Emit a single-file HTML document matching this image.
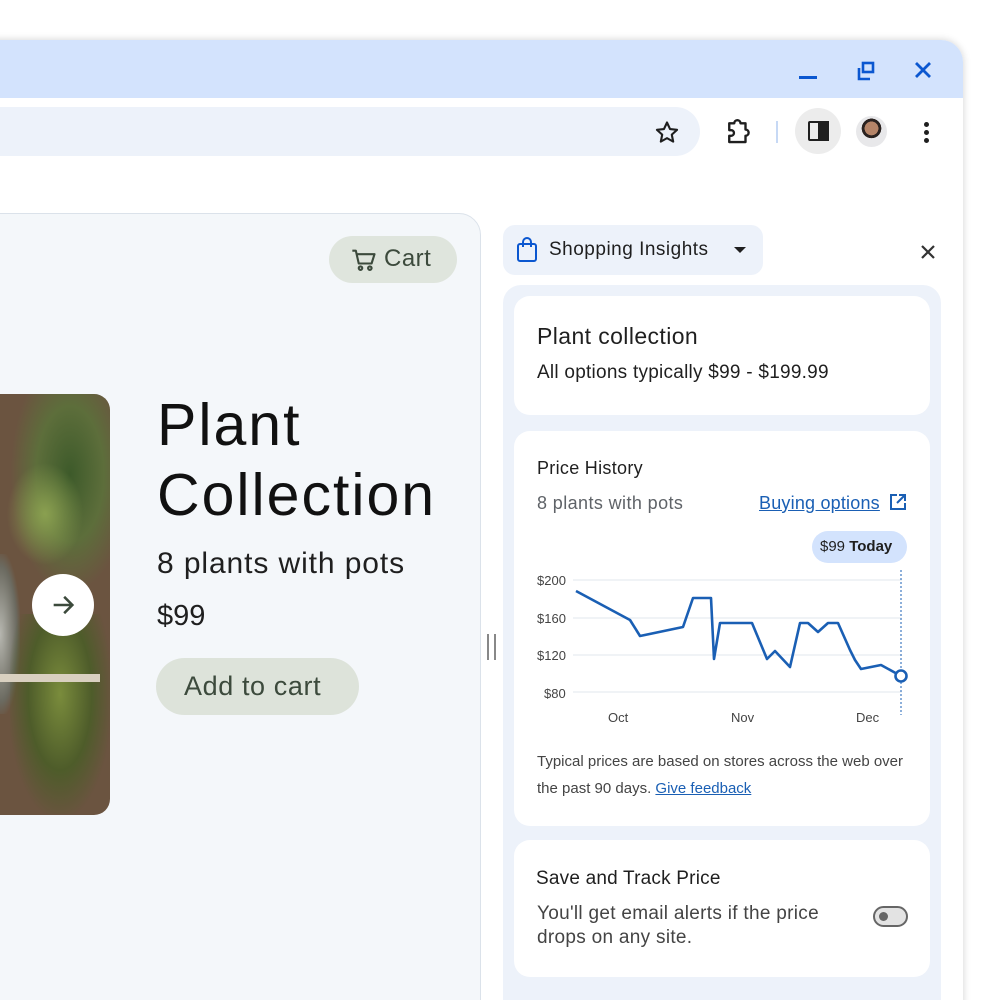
<!DOCTYPE html>
<html style="width:1000px;height:1000px;overflow:hidden"><head><style>
*{margin:0;padding:0;box-sizing:border-box}
body{width:1000px;height:1000px;background:#fff;position:relative;overflow:hidden;font-family:"Liberation Sans",sans-serif;color:#1f1f1f}
.abs{position:absolute}
</style></head><body>
<div class="abs" style="left:-20px;top:40px;width:983px;height:990px;background:#fff;border-radius:0 22px 0 0;box-shadow:0 0 8px rgba(0,0,0,.18)"></div>
<div class="abs" style="left:0;top:40px;width:963px;height:58px;background:#d3e3fd;border-radius:0 22px 0 0"></div>
<div class="abs" style="left:799px;top:76px;width:18px;height:3px;background:#0b57d0"></div>
<svg class="abs" style="left:855px;top:60px" width="22" height="22" viewBox="0 0 22 22" fill="none" stroke="#0b57d0" stroke-width="2.6"><rect x="8" y="3" width="10" height="9"/><path d="M4 8v11h11"/></svg>
<svg class="abs" style="left:913px;top:60px" width="20" height="20" viewBox="0 0 20 20" stroke="#0b57d0" stroke-width="2.8"><path d="M3 3L17 17M17 3L3 17"/></svg>
<div class="abs" style="left:-30px;top:107px;width:730px;height:49px;background:#edf2fa;border-radius:25px"></div>
<svg class="abs" style="left:653px;top:119px" width="28" height="28" viewBox="0 0 24 24" fill="none" stroke="#1f1f1f" stroke-width="1.8" stroke-linejoin="round"><path d="M12 3l2.6 5.6 6 .7-4.5 4.1 1.2 6L12 16.4 6.7 19.4l1.2-6L3.4 9.3l6-.7z"/></svg>
<svg class="abs" style="left:723px;top:117px" width="30" height="30" viewBox="0 0 24 24" fill="none" stroke="#1f1f1f" stroke-width="1.9" stroke-linejoin="round"><path d="M5 5h4a2.5 2.5 0 0 1 5 0h4v5a2.5 2.5 0 0 1 0 5v5H5v-5h1.5a2 2 0 0 0 0-4.5H5z"/></svg>
<div class="abs" style="left:776px;top:121px;width:2px;height:22px;background:#c7d9f5"></div>
<div class="abs" style="left:795px;top:108px;width:46px;height:46px;border-radius:50%;background:#ececec"></div>
<div class="abs" style="left:808px;top:121px;width:21px;height:20px;border:2.5px solid #1f1f1f;border-radius:2px"></div>
<div class="abs" style="left:818px;top:121px;width:11px;height:20px;background:#1f1f1f"></div>
<div class="abs" style="left:856px;top:116px;width:31px;height:31px;border-radius:50%;background:radial-gradient(circle at 50% 40%,#b58468 0 28%,#2a2220 29% 40%,#e8e8ea 41%)"></div>
<div class="abs" style="left:924px;top:122px;width:5px;height:5px;border-radius:50%;background:#1f1f1f;box-shadow:0 8px 0 #1f1f1f,0 16px 0 #1f1f1f"></div>
<div class="abs" style="left:-30px;top:213px;width:511px;height:820px;background:#f4f7fa;border:1px solid #dbe2ea;border-radius:0 22px 0 0"></div>
<div class="abs" style="left:329px;top:236px;width:128px;height:47px;border-radius:24px;background:#dfe5dd"></div>
<svg class="abs" style="left:350px;top:246px" width="28" height="28" viewBox="0 0 24 24" fill="none" stroke="#3c4a3c" stroke-width="1.8" stroke-linejoin="round"><path d="M2 4h3l2.5 11h11L21 7H6.5"/><circle cx="9" cy="19" r="1.5"/><circle cx="17" cy="19" r="1.5"/></svg>
<div class="abs" style="left:384px;top:245px;font-size:24px;color:#3c4a3c;letter-spacing:0.5px">Cart</div>
<div class="abs" style="left:-20px;top:394px;width:130px;height:421px;border-radius:0 16px 16px 0;overflow:hidden;background:#6b5440">
<div class="abs" style="left:30px;top:0;width:100px;height:200px;background:radial-gradient(ellipse at 60% 40%,#3d5a2a,#5d6e3b 40%,transparent 70%)"></div>
<div class="abs" style="left:0;top:160px;width:40px;height:160px;background:radial-gradient(ellipse,#b7b7b0,#6b6a60 60%,transparent 75%)"></div>
<div class="abs" style="left:30px;top:220px;width:100px;height:200px;background:radial-gradient(ellipse at 50% 40%,#7a8c3c,#4e5c2a 45%,transparent 75%)"></div>
<div class="abs" style="left:20px;top:60px;width:90px;height:120px;background:radial-gradient(ellipse at 50% 50%,#8aa050,transparent 60%)"></div>
<div class="abs" style="left:20px;top:280px;width:100px;height:8px;background:#d9d0c0"></div>
</div>
<div class="abs" style="left:32px;top:574px;width:62px;height:62px;border-radius:50%;background:#fff"></div>
<svg class="abs" style="left:49px;top:591px" width="28" height="28" viewBox="0 0 24 24" fill="none" stroke="#3c4a3c" stroke-width="2.2"><path d="M4 12h15M13 5l7 7-7 7"/></svg>
<div class="abs" style="left:157px;top:390px;font-size:59px;line-height:70px;color:#111;letter-spacing:2px">Plant<br>Collection</div>
<div class="abs" style="left:157px;top:547px;font-size:30px;color:#1f1f1f;letter-spacing:0.9px">8 plants with pots</div>
<div class="abs" style="left:157px;top:600px;font-size:29px;color:#1f1f1f">$99</div>
<div class="abs" style="left:156px;top:658px;width:203px;height:57px;border-radius:29px;background:#dde3da"></div>
<div class="abs" style="left:184px;top:671px;font-size:27px;color:#3c4a3c;letter-spacing:0.6px">Add to cart</div>
<div class="abs" style="left:487px;top:634px;width:2px;height:26px;background:#888"></div>
<div class="abs" style="left:494px;top:634px;width:2px;height:26px;background:#888"></div>
<div class="abs" style="left:503px;top:225px;width:260px;height:50px;border-radius:12px;background:#edf2fa"></div>
<svg class="abs" style="left:515px;top:237px" width="24" height="26" viewBox="0 0 24 26" fill="none" stroke="#0b57d0" stroke-width="2"><rect x="3" y="7" width="18" height="17" rx="2"/><path d="M8 10V5a4 4 0 0 1 8 0v5"/></svg>
<div class="abs" style="left:549px;top:239px;font-size:19px;color:#1f1f1f;letter-spacing:0.5px">Shopping Insights</div>
<div class="abs" style="left:734px;top:247px;width:0;height:0;border-left:6px solid transparent;border-right:6px solid transparent;border-top:6px solid #1f1f1f"></div>
<svg class="abs" style="left:920px;top:244px" width="16" height="16" viewBox="0 0 16 16" stroke="#333" stroke-width="2.2"><path d="M2 2L14 14M14 2L2 14"/></svg>
<div class="abs" style="left:503px;top:285px;width:438px;height:760px;border-radius:18px;background:#edf2fa"></div>
<div class="abs" style="left:514px;top:296px;width:416px;height:119px;border-radius:16px;background:#fff"></div>
<div class="abs" style="left:537px;top:323px;font-size:23px;color:#1f1f1f;letter-spacing:0.4px">Plant collection</div>
<div class="abs" style="left:537px;top:362px;font-size:19px;color:#1f1f1f;letter-spacing:0.25px">All options typically $99 - $199.99</div>
<div class="abs" style="left:514px;top:431px;width:416px;height:395px;border-radius:16px;background:#fff"></div>
<div class="abs" style="left:537px;top:458px;font-size:18px;color:#1f1f1f;letter-spacing:0.3px">Price History</div>
<div class="abs" style="left:537px;top:493px;font-size:18px;color:#5f6368;letter-spacing:0.4px">8 plants with pots</div>
<div class="abs" style="left:759px;top:493px;font-size:18px;color:#1a5fb4;text-decoration:underline;letter-spacing:0.2px">Buying options</div>
<svg class="abs" style="left:889px;top:493px" width="18" height="18" viewBox="0 0 18 18" fill="none" stroke="#1a5fb4" stroke-width="2"><path d="M8 2H2v14h14v-6M10 2h6v6M16 2L8 10"/></svg>
<div class="abs" style="left:812px;top:531px;width:95px;height:32px;border-radius:16px;background:#d3e3fd"></div>
<div class="abs" style="left:820px;top:538px;font-size:15px;color:#1f1f1f">$99 <b>Today</b></div>
<svg class="abs" style="left:530px;top:565px" width="390" height="170">
<g stroke="#eceff3" stroke-width="1.5"><path d="M43 15H372M43 53H372M43 90H372M43 127H372"/></g>
<path d="M371 5V150" stroke="#1a5fb4" stroke-width="1" stroke-dasharray="2 2"/>
<g font-family="Liberation Sans" font-size="13" fill="#444"><text x="7" y="20">$200</text><text x="7" y="58">$160</text><text x="7" y="95">$120</text><text x="14" y="133">$80</text><text x="78" y="157">Oct</text><text x="201" y="157">Nov</text><text x="326" y="157">Dec</text></g>
<polyline fill="none" stroke="#1a5fb4" stroke-width="2.6" stroke-linejoin="round" points="46,26 100,55 110,71 153,62 163,33 181,33 184,94 190,58 222,58 237,94 245,86 260,102 270,58 278,58 288,67 298,58 308,58 320,85 325,95 331,104 351,100 371,111"/>
<circle cx="371" cy="111" r="5.5" fill="#fff" stroke="#1a5fb4" stroke-width="2.6"/>
</svg>
<div class="abs" style="left:537px;top:748px;font-size:15px;line-height:27px;color:#444">Typical prices are based on stores across the web over<br>the past 90 days. <span style="color:#1a5fb4;text-decoration:underline">Give feedback</span></div>
<div class="abs" style="left:514px;top:840px;width:416px;height:137px;border-radius:16px;background:#fff"></div>
<div class="abs" style="left:536px;top:868px;font-size:19px;color:#1f1f1f;letter-spacing:0.2px">Save and Track Price</div>
<div class="abs" style="left:537px;top:902px;font-size:19px;line-height:24px;color:#444;letter-spacing:0.3px">You'll get email alerts if the price<br>drops on any site.</div>
<div class="abs" style="left:873px;top:906px;width:35px;height:21px;border-radius:11px;background:#e3e3e3;border:2px solid #666"></div>
<div class="abs" style="left:879px;top:912px;width:9px;height:9px;border-radius:50%;background:#666"></div>
</body></html>
